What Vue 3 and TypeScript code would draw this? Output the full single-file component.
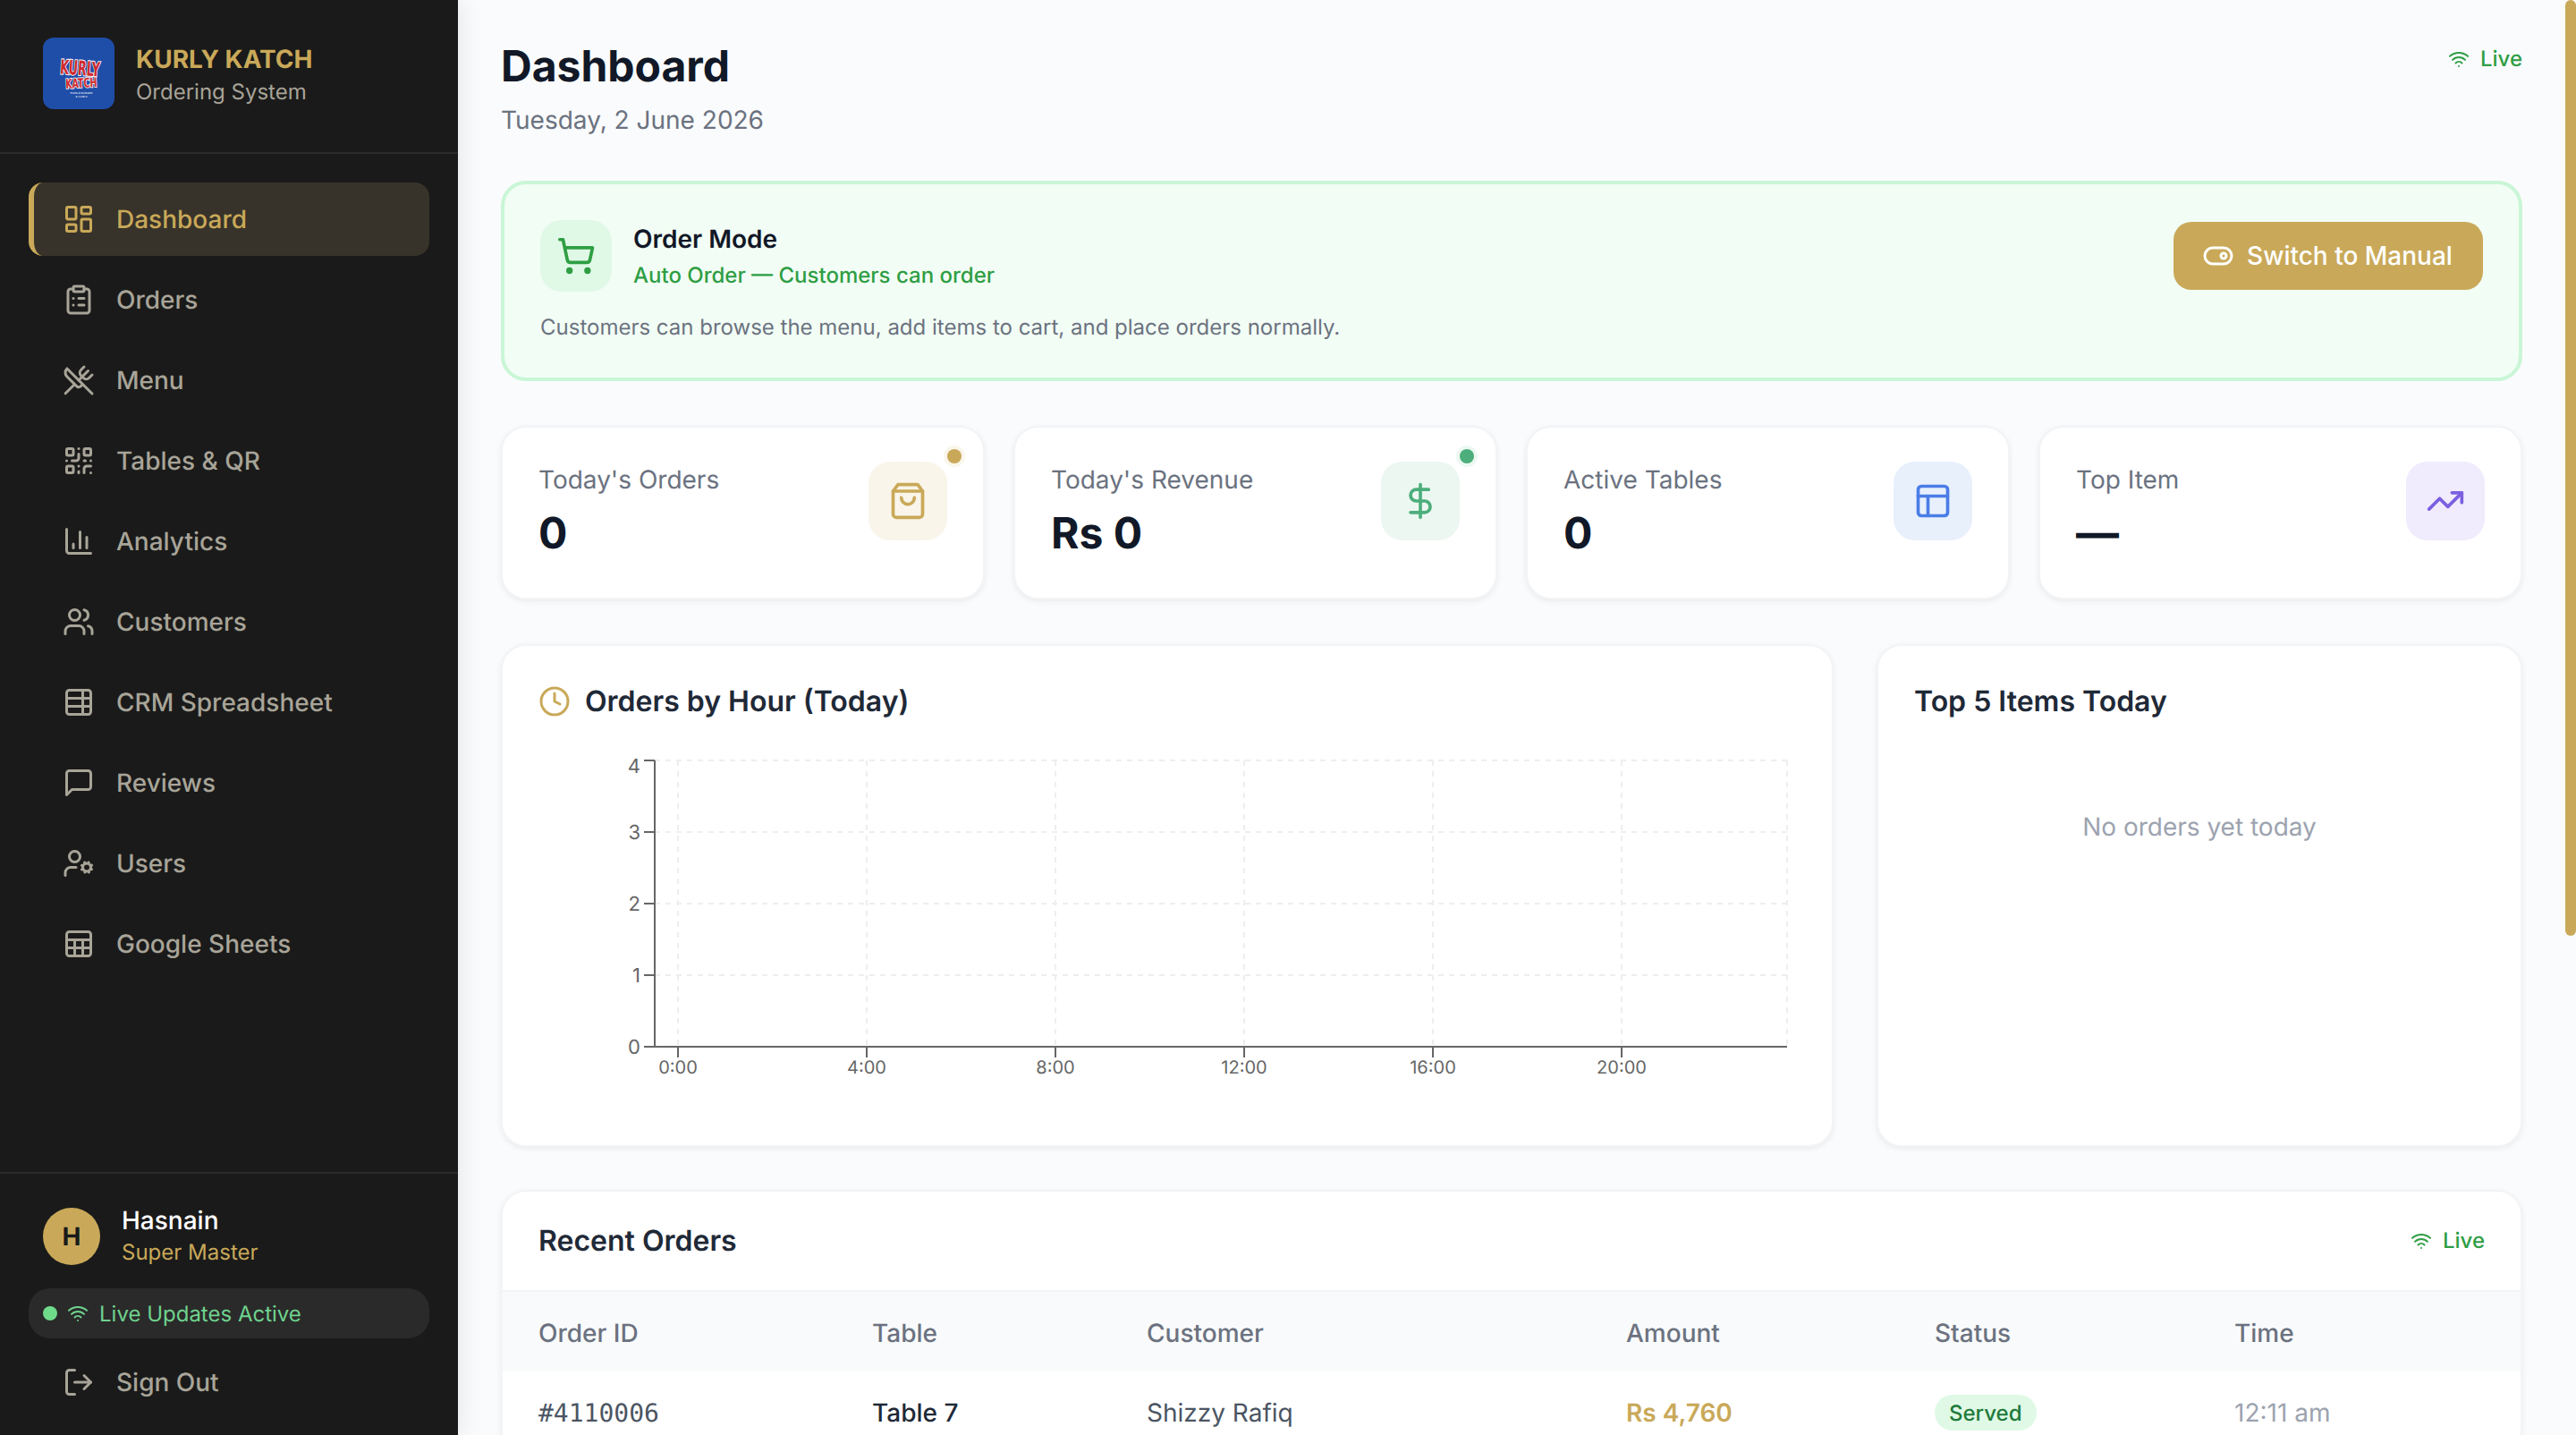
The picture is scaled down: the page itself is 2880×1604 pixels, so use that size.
<script setup lang="ts">
const icons: Record<string, string> = {
  dashboard: '<rect x="3" y="3" width="7" height="9" rx="1"/><rect x="14" y="3" width="7" height="5" rx="1"/><rect x="14" y="12" width="7" height="9" rx="1"/><rect x="3" y="16" width="7" height="5" rx="1"/>',
  orders: '<rect x="8" y="2" width="8" height="4" rx="1"/><path d="M16 4h2a2 2 0 0 1 2 2v14a2 2 0 0 1-2 2H6a2 2 0 0 1-2-2V6a2 2 0 0 1 2-2h2"/><path d="M12 11h4"/><path d="M12 16h4"/><path d="M8 11h.01"/><path d="M8 16h.01"/>',
  menu: '<path d="m16 2-2.3 2.3a3 3 0 0 0 0 4.2l1.8 1.8a3 3 0 0 0 4.2 0L22 8"/><path d="M15 15 3.3 3.3a4.2 4.2 0 0 0 0 6l7.3 7.3c.7.7 2 .7 2.8 0L15 15Zm0 0 7 7"/><path d="m2.1 21.8 6.4-6.3"/><path d="m19 5-7 7"/>',
  qr: '<rect width="5" height="5" x="3" y="3" rx="1"/><rect width="5" height="5" x="16" y="3" rx="1"/><rect width="5" height="5" x="3" y="16" rx="1"/><path d="M21 16h-3a2 2 0 0 0-2 2v3"/><path d="M21 21v.01"/><path d="M12 7v3a2 2 0 0 1-2 2H7"/><path d="M3 12h.01"/><path d="M12 3h.01"/><path d="M12 16v.01"/><path d="M16 12h1"/><path d="M21 12v.01"/><path d="M12 21v-1"/>',
  chart: '<path d="M3 3v16a2 2 0 0 0 2 2h16"/><path d="M18 17V9"/><path d="M13 17V5"/><path d="M8 17v-3"/>',
  users: '<path d="M16 21v-2a4 4 0 0 0-4-4H6a4 4 0 0 0-4 4v2"/><circle cx="9" cy="7" r="4"/><path d="M22 21v-2a4 4 0 0 0-3-3.87"/><path d="M16 3.13a4 4 0 0 1 0 7.75"/>',
  crm: '<path d="M15 3v18"/><rect width="18" height="18" x="3" y="3" rx="2"/><path d="M21 9H3"/><path d="M21 15H3"/>',
  reviews: '<path d="M21 15a2 2 0 0 1-2 2H7l-4 4V5a2 2 0 0 1 2-2h14a2 2 0 0 1 2 2z"/>',
  usercog: '<circle cx="18" cy="15" r="3"/><circle cx="9" cy="7" r="4"/><path d="M10 15H6a4 4 0 0 0-4 4v2"/><path d="m21.7 16.4-.9-.3"/><path d="m15.2 13.9-.9-.3"/><path d="m16.6 18.7.3-.9"/><path d="m19.1 12.2.3-.9"/><path d="m19.6 18.7-.4-1"/><path d="m16.8 12.3-.4-1"/><path d="m14.3 16.6 1-.4"/><path d="m20.7 13.8 1-.4"/>',
  sheets: '<rect width="18" height="18" x="3" y="3" rx="2"/><path d="M3 9h18"/><path d="M3 15h18"/><path d="M9 9v12"/><path d="M15 9v12"/>',
  logout: '<path d="M9 21H5a2 2 0 0 1-2-2V5a2 2 0 0 1 2-2h4"/><polyline points="16 17 21 12 16 7"/><line x1="21" x2="9" y1="12" y2="12"/>',
  wifi: '<path d="M12 20h.01"/><path d="M2 8.82a15 15 0 0 1 20 0"/><path d="M5 12.859a10 10 0 0 1 14 0"/><path d="M8.5 16.429a5 5 0 0 1 7 0"/>',
  cart: '<circle cx="8" cy="21" r="1"/><circle cx="19" cy="21" r="1"/><path d="M2.05 2.05h2l2.66 12.42a2 2 0 0 0 2 1.58h9.78a2 2 0 0 0 1.95-1.57l1.65-7.43H5.12"/>',
  bag: '<path d="M6 2 3 6v14a2 2 0 0 0 2 2h14a2 2 0 0 0 2-2V6l-3-4Z"/><path d="M3 6h18"/><path d="M16 10a4 4 0 0 1-8 0"/>',
  dollar: '<line x1="12" x2="12" y1="2" y2="22"/><path d="M17 5H9.5a3.5 3.5 0 0 0 0 7h5a3.5 3.5 0 0 1 0 7H6"/>',
  layout: '<rect width="18" height="18" x="3" y="3" rx="2"/><path d="M3 9h18"/><path d="M9 21V9"/>',
  trend: '<polyline points="22 7 13.5 15.5 8.5 10.5 2 17"/><polyline points="16 7 22 7 22 13"/>',
  clock: '<circle cx="12" cy="12" r="10"/><polyline points="12 6 12 12 16 14"/>',
  toggle: '<rect width="20" height="12" x="2" y="6" rx="6"/><circle cx="16" cy="12" r="2"/>',
}

const nav = [
  { label: 'Dashboard', icon: 'dashboard', active: true },
  { label: 'Orders', icon: 'orders' },
  { label: 'Menu', icon: 'menu' },
  { label: 'Tables & QR', icon: 'qr' },
  { label: 'Analytics', icon: 'chart' },
  { label: 'Customers', icon: 'users' },
  { label: 'CRM Spreadsheet', icon: 'crm' },
  { label: 'Reviews', icon: 'reviews' },
  { label: 'Users', icon: 'usercog' },
  { label: 'Google Sheets', icon: 'sheets' },
]

const stats = [
  { label: "Today's Orders", value: '0', icon: 'bag', tone: 'gold', dot: true },
  { label: "Today's Revenue", value: 'Rs 0', icon: 'dollar', tone: 'green', dot: true },
  { label: 'Active Tables', value: '0', icon: 'layout', tone: 'blue', dot: false },
  { label: 'Top Item', value: '—', icon: 'trend', tone: 'purple', dot: false },
]

const axisLeft = 130
const axisRight = 1396
const chartTop = 20
const chartBottom = 340
const xTicks = [0, 4, 8, 12, 16, 20].map((h) => ({ x: 156 + (h / 4) * 211, label: `${h}:00` }))
const yTicks = [4, 3, 2, 1, 0].map((v) => ({ y: chartBottom - v * 80, label: String(v) }))
</script>

<template>
  <div class="app">
    <aside class="sidebar">
      <div class="brand">
        <div class="logo">
          <svg viewBox="0 0 80 80" width="80" height="80">
            <g class="logo-text">
              <text transform="translate(41 42) rotate(4) scale(1 1.6)" text-anchor="middle" font-size="14">KURLY</text>
              <text transform="translate(43 56) rotate(-3) scale(1 1.4)" text-anchor="middle" font-size="10.5">KATCH</text>
            </g>
            <text class="logo-small" x="43" y="63" text-anchor="middle">PIZZA &amp; BURGER</text>
            <text class="logo-small" x="43" y="67" text-anchor="middle">&amp; CURLS</text>
          </svg>
        </div>
        <div>
          <div class="brand-name">KURLY KATCH</div>
          <div class="brand-sub">Ordering System</div>
        </div>
      </div>

      <nav class="nav">
        <a v-for="item in nav" :key="item.label" class="nav-item" :class="{ active: item.active }">
          <svg class="icon nav-icon" viewBox="0 0 24 24" v-html="icons[item.icon]"></svg>
          <span>{{ item.label }}</span>
        </a>
      </nav>

      <div class="side-foot">
        <div class="user">
          <div class="avatar">H</div>
          <div>
            <div class="user-name">Hasnain</div>
            <div class="user-role">Super Master</div>
          </div>
        </div>
        <div class="live-pill">
          <span class="live-dot"></span>
          <svg class="icon pill-wifi" viewBox="0 0 24 24" v-html="icons.wifi"></svg>
          <span>Live Updates Active</span>
        </div>
        <a class="nav-item signout">
          <svg class="icon nav-icon" viewBox="0 0 24 24" v-html="icons.logout"></svg>
          <span>Sign Out</span>
        </a>
      </div>
    </aside>

    <main class="main">
      <header class="page-head">
        <div>
          <h1>Dashboard</h1>
          <div class="date">Tuesday, 2 June 2026</div>
        </div>
        <div class="live">
          <svg class="icon live-icon" viewBox="0 0 24 24" v-html="icons.wifi"></svg>
          <span>Live</span>
        </div>
      </header>

      <section class="mode">
        <div class="mode-top">
          <div class="mode-left">
            <div class="mode-icon">
              <svg class="icon i44" viewBox="0 0 24 24" v-html="icons.cart"></svg>
            </div>
            <div>
              <div class="mode-title">Order Mode</div>
              <div class="mode-sub">Auto Order — Customers can order</div>
            </div>
          </div>
          <button class="switch">
            <svg class="icon i36" viewBox="0 0 24 24" v-html="icons.toggle"></svg>
            <span>Switch to Manual</span>
          </button>
        </div>
        <p class="mode-desc">Customers can browse the menu, add items to cart, and place orders normally.</p>
      </section>

      <section class="stats">
        <div v-for="s in stats" :key="s.label" class="card stat">
          <span v-if="s.dot" class="stat-dot" :class="s.tone"></span>
          <div>
            <div class="stat-label">{{ s.label }}</div>
            <div class="stat-value">{{ s.value }}</div>
          </div>
          <div class="stat-icon" :class="s.tone">
            <svg class="icon i44" viewBox="0 0 24 24" v-html="icons[s.icon]"></svg>
          </div>
        </div>
      </section>

      <section class="charts">
        <div class="card chart-card">
          <div class="chart-title">
            <svg class="icon clock" viewBox="0 0 24 24" v-html="icons.clock"></svg>
            <h2>Orders by Hour (Today)</h2>
          </div>
          <svg class="chart" viewBox="0 0 1406 410" width="1406" height="410">
            <g class="grid">
              <line v-for="t in yTicks.slice(0, 4)" :key="'h' + t.y" :x1="axisLeft" :x2="axisRight" :y1="t.y" :y2="t.y" />
              <line v-for="t in xTicks" :key="'v' + t.x" :x1="t.x" :x2="t.x" :y1="chartTop" :y2="chartBottom" />
              <line :x1="axisRight" :x2="axisRight" :y1="chartTop" :y2="chartBottom" />
            </g>
            <g class="axis">
              <line :x1="axisLeft" :x2="axisLeft" :y1="chartTop" :y2="chartBottom" />
              <line :x1="axisLeft" :x2="axisRight" :y1="chartBottom" :y2="chartBottom" />
              <line v-for="t in yTicks" :key="'yt' + t.y" :x1="axisLeft - 12" :x2="axisLeft" :y1="t.y" :y2="t.y" />
              <line v-for="t in xTicks" :key="'xt' + t.x" :x1="t.x" :x2="t.x" :y1="chartBottom" :y2="chartBottom + 12" />
            </g>
            <text v-for="(t, i) in yTicks" :key="'yl' + t.y" class="y-label" x="114" :y="t.y + (i === 0 ? 14 : 8)" text-anchor="end">{{ t.label }}</text>
            <text v-for="t in xTicks" :key="'xl' + t.x" class="x-label" :x="t.x" y="370" text-anchor="middle">{{ t.label }}</text>
          </svg>
        </div>
        <div class="card top-card">
          <h2>Top 5 Items Today</h2>
          <div class="empty">No orders yet today</div>
        </div>
      </section>

      <section class="card recent">
        <div class="recent-head">
          <h2>Recent Orders</h2>
          <div class="live small">
            <svg class="icon live-icon" viewBox="0 0 24 24" v-html="icons.wifi"></svg>
            <span>Live</span>
          </div>
        </div>
        <table>
          <colgroup>
            <col class="c1" /><col class="c2" /><col class="c3" /><col class="c4" /><col class="c5" /><col />
          </colgroup>
          <thead>
            <tr>
              <th>Order ID</th><th>Table</th><th>Customer</th><th>Amount</th><th>Status</th><th>Time</th>
            </tr>
          </thead>
          <tbody>
            <tr>
              <td class="mono">#4110006</td>
              <td class="tbl">Table 7</td>
              <td class="cust">Shizzy Rafiq</td>
              <td class="amount">Rs 4,760</td>
              <td><span class="badge">Served</span></td>
              <td class="time">12:11 am</td>
            </tr>
          </tbody>
        </table>
      </section>
    </main>
  </div>
</template>

<style>
html, body { margin: 0; padding: 0; background: #fafbfc; }
</style>

<style scoped>
* { box-sizing: border-box; }
.app {
  display: flex;
  height: 100vh;
  overflow: hidden;
  font-family: Inter, "Noto Sans", sans-serif;
  text-rendering: geometricPrecision;
  color: #111827;
  background: #fafbfc;
}
.icon {
  fill: none;
  stroke: currentColor;
  stroke-width: 2;
  stroke-linecap: round;
  stroke-linejoin: round;
  flex: none;
}

/* sidebar */
.sidebar {
  width: 512px;
  flex: none;
  background: #1a1a1a;
  display: flex;
  flex-direction: column;
  height: 100%;
  position: relative;
  z-index: 1;
  box-shadow: 4px 0 24px rgba(0, 0, 0, 0.08);
}
.brand {
  height: 172px;
  border-bottom: 2px solid #2a2a2a;
  padding: 42px 48px 0;
  display: flex;
  gap: 24px;
  align-items: flex-start;
}
.logo {
  width: 80px;
  height: 80px;
  border-radius: 12px;
  background: #1f4ea8;
  flex: none;
  overflow: hidden;
}
.logo svg { display: block; }
.logo-text text {
  font-family: "DejaVu Sans Condensed", "DejaVu Sans", sans-serif;
  font-weight: 700;
  fill: #d0282c;
  stroke: #ffffff;
  stroke-width: 1.2px;
  paint-order: stroke;
}
.logo-small {
  font-family: "Liberation Sans", sans-serif;
  font-size: 3px;
  fill: #ffffff;
}
.brand-name {
  color: #c9a959;
  font-size: 28px;
  line-height: 40px;
  font-weight: 700;
  margin-top: 4px;
}
.brand-sub {
  color: #a8a498;
  font-size: 24px;
  line-height: 33px;
}
.nav {
  flex: 1;
  padding: 32px 32px 0;
  display: flex;
  flex-direction: column;
  gap: 8px;
}
.nav-item {
  height: 82px;
  display: flex;
  align-items: center;
  gap: 24px;
  padding: 0 32px;
  border-left: 6px solid transparent;
  border-radius: 16px;
  color: #a8a498;
  font-size: 28px;
  font-weight: 500;
}
.nav-item.active {
  color: #c9a959;
  background: #38332a;
  border-left-color: #c9a959;
}
.nav-icon { width: 36px; height: 36px; }
.side-foot {
  border-top: 2px solid #2a2a2a;
  padding: 34px 32px 18px;
}
.user {
  display: flex;
  align-items: center;
  gap: 24px;
  padding: 0 16px;
}
.avatar {
  width: 64px;
  height: 64px;
  border-radius: 50%;
  background: #c9a959;
  color: #1a1a1a;
  display: flex;
  align-items: center;
  justify-content: center;
  font-size: 28px;
  font-weight: 700;
  flex: none;
}
.user-name { color: #ffffff; font-size: 28px; line-height: 36px; font-weight: 500; }
.user-role { color: #c9a959; font-size: 24px; line-height: 36px; }
.live-pill {
  margin-top: 22px;
  height: 56px;
  border-radius: 24px;
  background: #2a2a2a;
  display: flex;
  align-items: center;
  padding: 0 16px;
  color: #6fd38f;
  font-size: 24px;
  font-weight: 400;
}
.live-dot { width: 16px; height: 16px; border-radius: 50%; background: #6fdc8c; flex: none; }
.pill-wifi { width: 24px; height: 24px; margin: 0 12px 0 11px; }
.signout { margin-top: 8px; }

/* main */
.main {
  flex: 1;
  min-width: 0;
  height: 100%;
  overflow: hidden;
  padding: 40px 60px 0 48px;
  display: flex;
  flex-direction: column;
  position: relative;
}
.main::after {
  content: "";
  position: absolute;
  top: 0;
  right: 0;
  width: 12px;
  height: 1046px;
  border-radius: 6px;
  background: #c9a959;
}
.page-head {
  display: flex;
  justify-content: space-between;
  align-items: flex-start;
  margin-bottom: 48px;
  flex: none;
}
h1 { margin: 0; font-size: 48px; line-height: 68px; font-weight: 700; color: #111827; }
.date { margin-top: 6px; font-size: 28px; line-height: 40px; color: #6b7280; }
.live {
  display: flex;
  align-items: center;
  gap: 12px;
  color: #2f9e44;
  font-size: 24px;
  font-weight: 500;
  margin-top: 8px;
  line-height: 36px;
}
.live-icon { width: 24px; height: 24px; }
.live.small { margin-top: 0; }

.mode {
  flex: none;
  height: 224px;
  border: 4px solid #c9f6d6;
  border-radius: 28px;
  background: #f2fdf5;
  padding: 40px;
}
.mode-top { display: flex; justify-content: space-between; align-items: center; }
.mode-left { display: flex; align-items: center; gap: 24px; }
.mode-icon {
  width: 80px;
  height: 80px;
  border-radius: 24px;
  background: #dff9e6;
  color: #2f9e44;
  display: flex;
  align-items: center;
  justify-content: center;
}
.i44 { width: 44px; height: 44px; }
.i36 { width: 36px; height: 36px; }
.mode-title { font-size: 28px; line-height: 42px; font-weight: 600; color: #111827; }
.mode-sub { font-size: 24px; line-height: 36px; font-weight: 500; color: #2f9e44; margin-top: 2px; }
.switch {
  height: 76px;
  width: 346px;
  border: 0;
  border-radius: 20px;
  background: #c9a959;
  color: #ffffff;
  display: flex;
  align-items: center;
  justify-content: center;
  gap: 14px;
  font-family: inherit;
  font-size: 28px;
  font-weight: 500;
  padding: 0 2px 0 0;
}
.mode-desc { margin: 20px 0 0; font-size: 24px; line-height: 40px; color: #6b7280; }

.card {
  background: #ffffff;
  border: 2px solid #f3f4f6;
  border-radius: 28px;
  box-shadow: 0 2px 6px rgba(0, 0, 0, 0.07);
}
.stats {
  flex: none;
  display: grid;
  grid-template-columns: repeat(4, 1fr);
  gap: 32px;
  margin-top: 50px;
}
.stat {
  height: 194px;
  position: relative;
  padding: 37px 40px 0 40px;
  display: flex;
  justify-content: space-between;
  align-items: flex-start;
}
.stat-dot {
  position: absolute;
  top: 24px;
  right: 24px;
  width: 16px;
  height: 16px;
  border-radius: 50%;
  background: #c9a959;
}
.stat-dot.gold { background: #c9a959; box-shadow: 0 0 0 4px #faf6ec; }
.stat-dot.green { background: #4cae7b; box-shadow: 0 0 0 4px #edf8f2; }
.stat-label { font-size: 28px; line-height: 42px; color: #6b7280; }
.stat-value { font-size: 48px; line-height: 64px; font-weight: 700; color: #111827; margin-top: 7px; }
.stat-icon {
  width: 88px;
  height: 88px;
  border-radius: 24px;
  margin-top: 1px;
  display: flex;
  align-items: center;
  justify-content: center;
}
.stat-icon.gold { background: #f9f5ea; color: #c9a959; }
.stat-icon.green { background: #ecf7f1; color: #4cae7b; }
.stat-icon.blue { background: #e8f0fc; color: #4a7de6; }
.stat-icon.purple { background: #f0ebfd; color: #7b5fe0; }

.charts {
  flex: none;
  display: grid;
  grid-template-columns: 1fr 722px;
  gap: 48px;
  margin-top: 50px;
}
h2 { margin: 0; font-size: 32px; line-height: 44px; font-weight: 600; color: #1f2937; }
.chart-card { height: 562px; padding: 40px; overflow: hidden; }
.chart-title { display: flex; align-items: center; gap: 16px; }
.clock { width: 36px; height: 36px; color: #c9a959; }
.chart { display: block; margin-top: 24px; }
.grid line { stroke: #eeeeee; stroke-width: 2; stroke-dasharray: 6 6; }
.axis line { stroke: #666666; stroke-width: 2; }
.y-label { font-size: 22px; fill: #666666; }
.x-label { font-size: 20px; fill: #666666; }
.top-card { height: 562px; padding: 40px; display: flex; flex-direction: column; }
.empty { text-align: center; color: #9ca3af; font-size: 28px; line-height: 40px; margin-top: 98px; }

.recent { flex: none; margin-top: 48px; border-bottom: 0; overflow: hidden; }
.recent-head {
  height: 112px;
  display: flex;
  align-items: center;
  justify-content: space-between;
  padding: 0 40px;
  border-bottom: 2px solid #f3f4f6;
}
table { width: 100%; border-collapse: collapse; table-layout: fixed; }
.c1 { width: 413px; }
.c2 { width: 307px; }
.c3 { width: 536px; }
.c4 { width: 345px; }
.c5 { width: 335px; }
th {
  height: 89px;
  background: #f9fafb;
  text-align: left;
  font-size: 28px;
  font-weight: 500;
  color: #6b7280;
  padding: 2px 0 0 40px;
}
td { height: 92px; font-size: 28px; padding: 0 0 0 40px; }
th:not(:first-child), td:not(:first-child) { padding-left: 0; }
.mono { font-family: "DejaVu Sans Mono", monospace; color: #4b5563; }
.tbl { font-weight: 500; color: #1f2937; }
.cust { color: #4b5563; }
.amount { font-weight: 600; color: #c9a959; }
.time { color: #9ca3af; }
.badge {
  display: inline-flex;
  align-items: center;
  height: 40px;
  padding: 0 16px;
  border-radius: 20px;
  background: #dff9e6;
  color: #1f7a3a;
  font-size: 24px;
  font-weight: 500;
}
</style>
